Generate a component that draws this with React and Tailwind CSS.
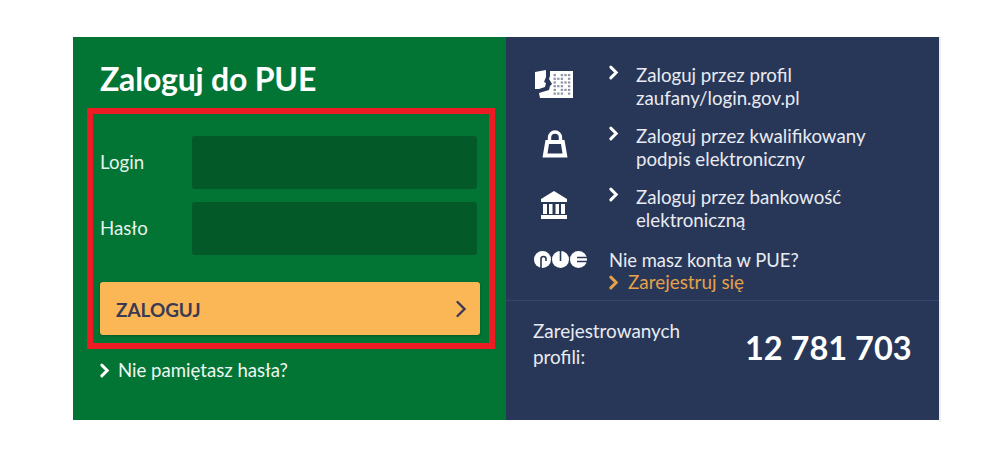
import React from "react";

const Chevron = ({ className = "", color = "currentColor", w = 2.8 }) => (
  <svg viewBox="0 0 10 14" className={className} fill="none" stroke={color} strokeWidth={w} strokeLinecap="round" strokeLinejoin="miter">
    <path d="M2.5 2 L7.5 7 L2.5 12" />
  </svg>
);

const ProfileIcon = () => (
  <svg width="39" height="28" viewBox="0 0 39 28" className="block">
    <path fill="#fff" d="M1 2 L12 0 V7 L10 12 L12 13 L11 17 L5 19 H1 Z" />
    <path fill="#fff" d="M16 1 H39 V28 H6 L5 23 L15 20 L16 16 L18 14 L15 9 L16 6 Z" />
    <g fill="#8f97a8">
      {[0, 1, 2, 3, 4, 5].map((r) =>
        [0, 1, 2, 3, 4].map((c) =>
          (r * 2 + c) % 4 !== 1 ? <rect key={`${r}-${c}`} x={19.5 + c * 3.6} y={4 + r * 3.7} width="2.4" height="2.2" /> : null
        )
      )}
    </g>
  </svg>
);

const LockIcon = () => (
  <svg width="26" height="28" viewBox="0 0 26 28" className="block">
    <path fill="none" stroke="#fff" strokeWidth="3.4" d="M7.5 12 V7.5 A5.5 5.5 0 0 1 18.5 7.5 V12" />
    <path fill="#fff" fillRule="evenodd" d="M3.5 10 H22.5 L25.5 27.5 H0.5 Z M7 14 L5.5 23.5 H20.5 L19 14 Z" />
  </svg>
);

const BankIcon = () => (
  <svg width="28" height="28" viewBox="0 0 28 28" className="block">
    <path fill="#fff" d="M14 0 L27 8 V11 H1 V8 Z" />
    <rect x="3" y="13" width="4" height="10" fill="#fff" />
    <rect x="9" y="13" width="3.5" height="10" fill="#fff" />
    <rect x="15.5" y="13" width="3.5" height="10" fill="#fff" />
    <rect x="21" y="13" width="4" height="10" fill="#fff" />
    <rect x="1" y="24" width="26" height="4" fill="#fff" />
  </svg>
);

const PueIcon = () => (
  <svg width="53" height="17" viewBox="0 0 53 17" className="block">
    <circle cx="8.5" cy="8.5" r="8.5" fill="#fff" />
    <path d="M7 17 V8 A2.5 2.5 0 0 1 12 8 V10" fill="none" stroke="#283758" strokeWidth="1.6" />
    <circle cx="26.5" cy="8.5" r="8.5" fill="#fff" />
    <path d="M26.5 0 V10" stroke="#283758" strokeWidth="1.6" />
    <circle cx="44.5" cy="8.5" r="8.5" fill="#fff" />
    <path d="M43 6.5 H53 M43 10.5 H53" stroke="#283758" strokeWidth="1.4" />
  </svg>
);

const Row = ({ icon, lines }) => (
  <div className="flex h-[61px]">
    <div className="w-[75px] pl-[1px] shrink-0">{icon}</div>
    <Chevron className="w-[11px] h-[15px] mt-[1px] text-white shrink-0" />
    <div className="ml-[17px] text-[18.7px] leading-[23px] text-[#e8ebf1]">
      {lines[0]}
      <br />
      {lines[1]}
    </div>
  </div>
);

export default function App() {
  return (
    <div className="w-[1000px] h-[469px] bg-white pt-[37px] pl-[73px] font-['Lato',sans-serif]">
      <div className="flex w-[868px] h-[385px] border-r-2 border-[#eeeeee]">
        <div className="w-[433px] h-[383px] bg-[#027535] pl-[14px] pt-[23px]">
          <h1 className="ml-[13px] text-[32px] leading-[38px] font-bold text-white tracking-[-0.2px]">Zaloguj do PUE</h1>
          <div className="mt-[10px] w-[408px] h-[241px] border-[6px] border-[#ed1c24] pl-[7px] pt-[22px]">
            <div className="flex items-center h-[53px]">
              <label className="w-[92px] text-[18.7px] text-[#e6f2ea]">Login</label>
              <div className="w-[285px] h-[53px] rounded-[3px] bg-[#035a28]" />
            </div>
            <div className="flex items-center h-[53px] mt-[13px]">
              <label className="w-[92px] text-[18.7px] text-[#e6f2ea]">Hasło</label>
              <div className="w-[285px] h-[53px] rounded-[3px] bg-[#035a28]" />
            </div>
            <div className="flex items-center justify-between w-[380px] h-[53px] mt-[27px] rounded-[3px] bg-[#fbb655] pl-[16px] pr-[12px] shadow-[0_1px_3px_rgba(0,60,20,0.5)]">
              <span className="pt-[4px] text-[18.9px] font-bold text-[#3b3a55]">ZALOGUJ</span>
              <Chevron className="w-[14px] h-[20px] text-[#3b3a55]" w={1.7} />
            </div>
          </div>
          <div className="flex items-center mt-[9px] ml-[12px] text-[18.6px] leading-[24px] text-[#f0f7f2]">
            <Chevron className="w-[11px] h-[15px] text-white" />
            <span className="ml-[8px]">Nie pamiętasz hasła?</span>
          </div>
        </div>
        <div className="w-[433px] h-[383px] bg-[#283758]">
          <div className="h-[264px] pl-[27px] pt-[27px] border-b border-[#33456a]">
            <Row icon={<div className="pt-[6px]"><ProfileIcon /></div>} lines={["Zaloguj przez profil", "zaufany/login.gov.pl"]} />
            <Row icon={<div className="pl-[8px] pt-[5px]"><LockIcon /></div>} lines={["Zaloguj przez kwalifikowany", "podpis elektroniczny"]} />
            <Row icon={<div className="pl-[6px] pt-[5px]"><BankIcon /></div>} lines={["Zaloguj przez bankowość", "elektroniczną"]} />
            <div className="flex mt-[2px]">
              <div className="w-[76px] pl-[1px] pt-[2px] shrink-0"><PueIcon /></div>
              <div className="text-[18.4px] leading-[22px]">
                <div className="text-[#e8ebf1]">Nie masz konta w PUE?</div>
                <div className="flex items-center text-[#e5a048]">
                  <Chevron className="w-[11px] h-[15px] -ml-[1px]" />
                  <span className="ml-[9px] text-[18.9px]">Zarejestruj się</span>
                </div>
              </div>
            </div>
          </div>
          <div className="flex items-center pl-[27px] pt-[17px]">
            <div className="w-[212px] text-[18.9px] leading-[26px] text-[#e8ebf1]">
              Zarejestrowanych
              <br />
              profili:
            </div>
            <div className="mt-[8px] text-[32.5px] leading-[40px] font-bold text-white">12 781 703</div>
          </div>
        </div>
      </div>
    </div>
  );
}
